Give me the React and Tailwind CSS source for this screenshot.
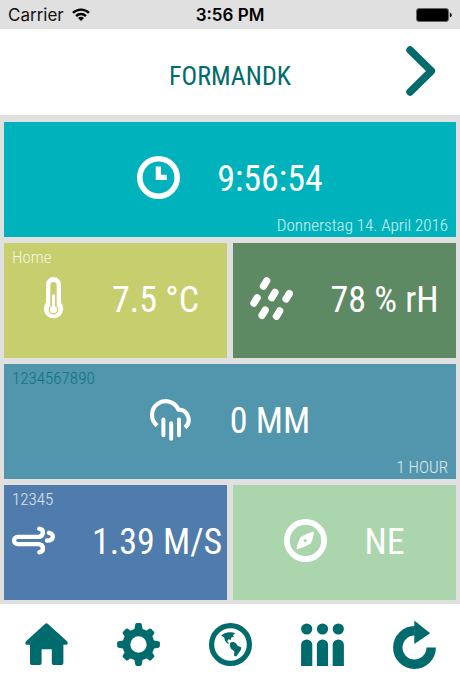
import React from "react";

const Icon = ({ children, className = "" }) => (
  <svg viewBox="0 0 43 43" fill="currentColor" aria-hidden="true" className={`size-[43px] shrink-0 ${className}`}>
    {children}
  </svg>
);

const Stroke = ({ width, children, cap = "round" }) => (
  <g fill="none" stroke="currentColor" strokeWidth={width} strokeLinecap={cap} strokeLinejoin="round">
    {children}
  </g>
);

const ClockIcon = () => (
  <Icon>
    <Stroke width="5.6"><circle cx="21.5" cy="21.5" r="18.7" /></Stroke>
    <path d="M18.7 10.5H24V18.8H29.8V24H18.7Z" />
  </Icon>
);

const ThermometerIcon = () => (
  <Icon>
    <path
      fillRule="evenodd"
      d="M14 7.5a7.5 7.5 0 0 1 15 0V25.5a9.7 9.7 0 1 1-15 0ZM18.3 8.3V28.9a4.9 4.9 0 1 0 6.4 0V8.3a3.2 3.2 0 0 0-6.4 0Z"
    />
    <circle cx="21.5" cy="32.6" r="3.7" />
    <path d="M20 18.5a1.5 1.5 0 0 1 3 0V31H20Z" />
  </Icon>
);

const DropsIcon = () => (
  <Icon>
    <Stroke width="7.2">
      <path d="M13.4 9.2 16.7 3.8M3.9 26.1 7.2 20.7M21.7 20.8 25 15.4M36 22 39.3 16.6M12 38.4 15.3 33M26.4 39.3 29.7 33.9" />
    </Stroke>
  </Icon>
);

const CloudIcon = () => (
  <Icon>
    <Stroke width="4.1" cap="butt">
      <path d="M7.2 27.6A13.7 13.7 0 1 1 28.4 11.6A10.2 10.2 0 0 1 35 29.6" />
    </Stroke>
    <Stroke width="4"><path d="M13.4 21.5V37.3M21.2 25.3V40.8M29 21.5V37.3" /></Stroke>
  </Icon>
);

const WindIcon = () => (
  <Icon>
    <Stroke width="4.4">
      <path d="M27.3 9.8C30 10.2 31 12 30.9 13.7C30.8 16.3 29 17.9 26.5 17.9H5.6A3.6 3.6 0 0 0 5.6 25.1H26.5C29 25.1 30.8 26.7 30.9 29.3C31 31 30 32.8 27.3 33.2" />
      <path d="M37 13.8C39.9 14.4 40.9 16.2 40.8 17.8C40.6 20.3 38.4 21.5 35 21.5" />
    </Stroke>
  </Icon>
);

const CompassIcon = () => (
  <Icon>
    <Stroke width="5.8"><circle cx="21.5" cy="21.5" r="18.6" /></Stroke>
    <path fillRule="evenodd" d="M30 12.5C29.6 17 28.5 21.2 26.6 24.6C23.5 26.6 17.5 29.3 12.5 30.3C13 25.8 14.6 21.6 16.5 18.3C19.6 16.2 25 13.6 30 12.5ZM21.2 19.9a1.7 1.7 0 1 0 0 3.4a1.7 1.7 0 1 0 0-3.4Z" />
  </Icon>
);

const HomeIcon = () => (
  <Icon>
    <path d="M20 .9Q21.5-.4 23 .9L42 18.3Q43.8 21.6 41 21.8H38.4V40.2Q38.4 42 36.6 42H28.6Q26.8 42 26.8 40.2V26.2H16.6V40.2Q16.6 42 14.8 42H6.8Q5 42 5 40.2V21.8H2Q-.8 21.6 1 18.3Z" />
  </Icon>
);

const TOOTH = "M16.9 9L18.3 1.4Q18.6 .1 19.9 .1H23.1Q24.4 .1 24.7 1.4L26.1 9Z";
const SHORT_TOOTH = "M16.7 10L18 2.9Q18.3 1.6 19.6 1.6H23.4Q24.7 1.6 25 2.9L26.3 10Z";

const GearIcon = () => (
  <Icon>
    <Stroke width="7.8"><circle cx="21.5" cy="21.5" r="12.1" /></Stroke>
    {[0, 90, 180, 270].map((a) => (
      <path key={a} d={TOOTH} transform={`rotate(${a} 21.5 21.5)`} />
    ))}
    {[45, 135, 225, 315].map((a) => (
      <path key={a} d={SHORT_TOOTH} transform={`rotate(${a} 21.5 21.5)`} />
    ))}
  </Icon>
);

const GlobeIcon = () => (
  <Icon>
    <Stroke width="5.2"><circle cx="21.5" cy="21.5" r="18.9" /></Stroke>
    <path d="M12.2 12.6C14.5 10.2 18 8.8 22 9.2L26.4 9.9L23.8 12.3L25 13.8L22.2 14.6L21.6 17L19.4 16.2L18.2 18.6L20.6 20.6L18.4 20.4L16 17.8L15.2 14.6Z" />
    <path d="M21.3 19.6C23.4 18.4 25.8 18.8 27.2 20.6L28.2 22.6L32.4 24.4C32.2 27.4 30.4 28.6 29.4 30.6L27 33.4L25 32.8L25.4 28.6L21.8 25.6L20.8 22.4Z" />
  </Icon>
);

const PeopleIcon = () => (
  <Icon>
    {[5.7, 21.5, 37.3].map((x) => (
      <g key={x}>
        <circle cx={x} cy="6" r="5.6" />
        <path d={`M${x - 5.6} 43V22a5.6 5.6 0 0 1 11.2 0V43Z`} />
      </g>
    ))}
  </Icon>
);

const ReloadIcon = () => (
  <Icon className="overflow-visible">
    <Stroke width="9.4" cap="butt"><path d="M38.2 24.5A16.7 16.7 0 1 1 21.8 7.8" /></Stroke>
    <path d="M21.3-2.6L37.2 10.2L21.3 21Z" />
  </Icon>
);

function Tile({ icon, value, label, note, color, labelColor = "text-white/80", wide }) {
  return (
    <section className={`grid ${color} px-2 ${wide ? "col-span-2" : ""}`}>
      {label && (
        <h2 className={`col-start-1 row-start-1 self-start justify-self-start pt-[3px] text-[17px] leading-[22px] font-light ${labelColor}`}>
          {label}
        </h2>
      )}
      <div className="col-start-1 row-start-1 flex items-center gap-[37px] place-self-center pb-1 whitespace-nowrap">
        {icon}
        <span className="pt-[2px] text-[36px] leading-[44px]">{value}</span>
      </div>
      {note && (
        <p className="col-start-1 row-start-1 self-end justify-self-end pb-px text-[17px] leading-[22px] font-light text-white/80">
          {note}
        </p>
      )}
    </section>
  );
}

const NAV = [
  ["Home", HomeIcon],
  ["Settings", GearIcon],
  ["Map", GlobeIcon],
  ["Community", PeopleIcon],
  ["Reload", ReloadIcon],
];

export default function App() {
  return (
    <div className="flex min-h-screen flex-col bg-[#e0e0e0] font-['Roboto_Condensed','Liberation_Sans_Narrow',sans-serif] text-white">
      <div className="grid h-[29px] grid-cols-3 items-center px-2 font-['Inter',sans-serif] text-[17px] leading-[22px] text-[#111]">
        <div className="flex items-center gap-2">
          <span>Carrier</span>
          <svg viewBox="0 0 18 13" className="h-[13px] w-[18px]" aria-hidden="true">
            <g fill="none" stroke="#000" strokeWidth="2.4">
              <path d="M1 4.9A11.3 11.3 0 0 1 17 4.9" />
              <path d="M4.1 8.1A6.9 6.9 0 0 1 13.9 8.1" />
            </g>
            <path fill="#000" d="M9 13L6 10A4.2 4.2 0 0 1 12 10Z" />
          </svg>
        </div>
        <span className="text-center font-semibold text-black">3:56 PM</span>
        <svg viewBox="0 0 36 14" className="h-[14px] w-[36px] justify-self-end" aria-hidden="true">
          <rect x=".5" y=".5" width="32" height="13" rx="2.5" fill="#000" stroke="#666" />
          <path d="M33.8 4.6Q35.8 5.4 35.8 7T33.8 9.4Z" fill="#000" />
        </svg>
      </div>

      <header className="grid h-[86px] grid-cols-[1fr_auto_1fr] items-center bg-white px-6 text-[#006b6c]">
        <h1 className="col-start-2 pt-2 text-[26px] leading-[32px]">FORMANDK</h1>
        <button type="button" aria-label="Next" className="justify-self-end pb-[2px]">
          <svg viewBox="0 0 30 50" className="h-[50px] w-[30px]" aria-hidden="true">
            <path d="M4 4L25.4 25L4 46" fill="none" stroke="currentColor" strokeWidth="7.4" strokeLinecap="round" strokeLinejoin="round" />
          </svg>
        </button>
      </header>

      <main className="grid flex-1 auto-rows-[minmax(115px,1fr)] grid-cols-2 gap-[6px] px-1 pt-[7px] pb-1">
        <Tile wide color="bg-[#00b2bb]" icon={<ClockIcon />} value="9:56:54" note="Donnerstag 14. April 2016" />
        <Tile color="bg-[#c6ce6e]" icon={<ThermometerIcon />} value="7.5 °C" label="Home" />
        <Tile color="bg-[#5d8a62]" icon={<DropsIcon />} value="78 % rH" />
        <Tile wide color="bg-[#5196ac]" icon={<CloudIcon />} value="0 MM" label="1234567890" labelColor="text-[#0f7480]" note="1 HOUR" />
        <Tile color="bg-[#507bad]" icon={<WindIcon />} value="1.39 M/S" label="12345" />
        <Tile color="bg-[#aad5ad]" icon={<CompassIcon />} value="NE" />
      </main>

      <nav className="grid h-[86px] grid-cols-5 bg-white pb-[6px] text-[#006b6c]">
        {NAV.map(([name, Glyph]) => (
          <button key={name} type="button" aria-label={name} className="flex items-center justify-center">
            <Glyph />
          </button>
        ))}
      </nav>
    </div>
  );
}
